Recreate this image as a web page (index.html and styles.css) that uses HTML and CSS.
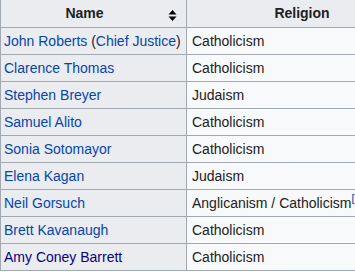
FILE: index.html
```html
<!DOCTYPE html>
<html>
<head>
<meta charset="utf-8">
<link rel="stylesheet" href="styles.css">
</head>
<body>
<table class="wikitable">
  <thead>
    <tr>
      <th class="hd sortable">Name<span class="sort"><svg width="9" height="11" viewBox="0 0 9 11"><path d="M4.5 0 L8.5 4.5 L0.5 4.5 Z M0.5 6.5 L8.5 6.5 L4.5 11 Z" fill="#000"/></svg></span></th>
      <th class="hd rel">Religion</th>
    </tr>
  </thead>
  <tbody>
    <tr><th class="rh"><a href="#">John Roberts</a> (<a href="#">Chief Justice</a>)</th><td>Catholicism</td></tr>
    <tr><th class="rh"><a href="#">Clarence Thomas</a></th><td>Catholicism</td></tr>
    <tr><th class="rh"><a href="#">Stephen Breyer</a></th><td>Judaism</td></tr>
    <tr><th class="rh"><a href="#">Samuel Alito</a></th><td>Catholicism</td></tr>
    <tr><th class="rh"><a href="#">Sonia Sotomayor</a></th><td>Catholicism</td></tr>
    <tr><th class="rh"><a href="#">Elena Kagan</a></th><td>Judaism</td></tr>
    <tr><th class="rh"><a href="#">Neil Gorsuch</a></th><td>Anglicanism / Catholicism<sup class="ref"><a href="#">[1]</a></sup></td></tr>
    <tr><th class="rh"><a href="#">Brett Kavanaugh</a></th><td>Catholicism</td></tr>
    <tr><th class="rh"><a class="visited" href="#">Amy Coney Barrett</a></th><td>Catholicism</td></tr>
  </tbody>
</table>
</body>
</html>
```
FILE: styles.css
```css
html, body {
  margin: 0;
  padding: 0;
  overflow: hidden;
  background: #ffffff;
}
body {
  font-family: "Liberation Sans", Arial, sans-serif;
  font-size: 14px;
  color: #202122;
}
.wikitable {
  border-collapse: collapse;
  margin-top: -1px;
  background: #f8f9fa;
  border: 1px solid #a2a9b1;
  width: 436px;
  table-layout: fixed;
}
.wikitable th, .wikitable td {
  border: 1px solid #a2a9b1;
  padding: 0 5px 0 3px;
  line-height: 26px;
  vertical-align: middle;
  white-space: nowrap;
}
.wikitable th:first-child {
  width: 186px;
  box-sizing: border-box;
}
.hd {
  background: #eaecf0;
  font-weight: bold;
  text-align: center;
}
.wikitable .hd {
  line-height: 27px;
}
.sortable {
  position: relative;
}
.wikitable .sortable {
  padding-right: 21px;
}
.sort {
  position: absolute;
  right: 9px;
  top: 10px;
  width: 9px;
  height: 11px;
  line-height: 0;
}
.wikitable .rel {
  padding-right: 21px;
}
.rh {
  background: #eaecf0;
  font-weight: normal;
  text-align: left;
}
.wikitable td {
  padding-left: 5px;
}
a {
  color: #0645ad;
  text-decoration: none;
}
a.visited {
  color: #0b0080;
}
.ref {
  font-size: 11px;
  line-height: 1;
  vertical-align: super;
}
.ref a { color: #0645ad; }
```
